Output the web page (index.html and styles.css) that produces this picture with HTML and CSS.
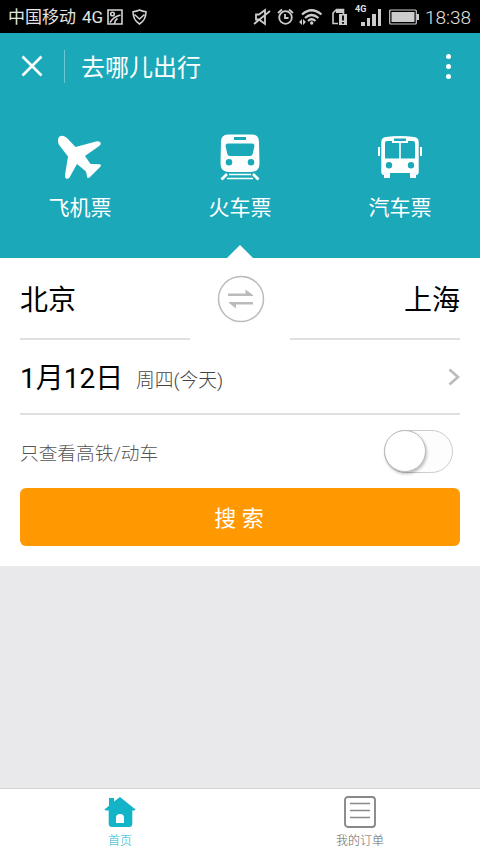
FILE: index.html
```
<!DOCTYPE html>
<html lang="zh-CN">
<head>
<meta charset="utf-8">
<title>去哪儿出行</title>
<link rel="stylesheet" href="styles.css">
</head>
<body>
<div class="status">
  <span class="carrier">中国移动</span><span class="net">4G</span>
  <svg class="s-img" width="16" height="16" viewBox="0 0 16 16" fill="none" stroke="#d4d4d4" stroke-width="1.600"><path d="M1 1H15V15H1ZM3 13.500Q6 8 13.500 6M7.500 14.500Q8 11 10.500 9.500"/><circle cx="5.500" cy="5" r="1.800"/></svg>
  <svg class="s-shield" width="15" height="16" viewBox="0 0 15 16" fill="none" stroke="#d4d4d4" stroke-width="1.500"><path d="M7.500 1Q10.500 2.500 14 2.700Q14 11 7.500 15Q1 11 1 2.700Q4.500 2.500 7.500 1ZM2.500 5.500L7.500 10L12.500 5.500"/></svg>
  <div class="status-right">
    <svg class="s-mute" width="18" height="18" viewBox="0 0 18 18" fill="none" stroke="#ccc" stroke-width="1.800"><path d="M3 6.500H6L12 2V16L6 11.500H3ZM1 16L17 3"/></svg>
    <svg class="s-alarm" width="17" height="18" viewBox="0 0 17 18" fill="none" stroke="#ccc" stroke-width="1.800"><circle cx="8.500" cy="9.500" r="6.300"/><path d="M1 5L5 1.500M12 1.500L16 5M8 6V10H11.500"/></svg>
    <svg class="s-wifi" width="24" height="18" viewBox="0 0 24 18" fill="none" stroke="#ccc" stroke-width="2.200"><path d="M3 6.500Q12.500 -2 22.500 6.500M6 10Q12.500 4 19.500 10M9 13Q12.500 9.500 16.500 13"/><circle cx="12.700" cy="15" r="1.700" fill="#ccc" stroke="none"/><path d="M0 14L3 11V17ZM4 11L7 14L4 17Z" fill="#ccc" stroke="none"/></svg>
    <svg class="s-sd" width="17" height="18" viewBox="0 0 17 18"><path d="M2 15.500V5L5.500 1.500H12.500V6M1.300 15.500H7" fill="none" stroke="#ccc" stroke-width="1.600"/><path d="M5 1H13V5H5ZM8 6H16V17H8Z" fill="#ccc"/><path d="M12 7.500V12.500M12 14V15.800" stroke="#000" stroke-width="1.800"/></svg>
    <div class="signal"><span class="sig-label">4G</span><i></i><i></i><i></i><i></i></div>
    <svg class="s-bat" width="30" height="16" viewBox="0 0 30 16"><rect x=".7" y="1" width="26.600" height="14" rx="1" fill="none" stroke="#ccc" stroke-width="1.200"/><path d="M2.500 3H25.500V13H2.500ZM28 5H30V11H28Z" fill="#ccc"/></svg>
    <span class="time">18:38</span>
  </div>
</div>
<header class="hero">
  <div class="titlebar">
    <svg class="close" width="22" height="22" viewBox="0 0 22 22" stroke="#fff" stroke-width="2.600"><path d="M1.500 1.500L20.500 20.500M20.500 1.500L1.500 20.500"/></svg>
    <span class="sep"></span>
    <h1>去哪儿出行</h1>
    <div class="more"><i></i><i></i><i></i></div>
  </div>
  <nav class="modes">
    <div class="mode">
      <svg width="48" height="48" viewBox="0 0 48 48"><path d="M3.500 3.500C6 1.800 9 3 11 5L19.500 14L40 8.500Q43.500 7.500 44.800 10Q45 12 42.500 13.500L29 23L34.500 31L43.500 31.200Q46 31.700 44.300 33.700L34 44Q31.300 46.300 31 43.500L30 38.500L21 31L13.500 44.500Q12 46.500 10 45.500Q8.500 44.500 9 42L12 23.500L3.500 12.500C1.500 10 1.500 5 3.500 3.500Z" fill="#fff"/></svg>
      <span>飞机票</span>
    </div>
    <div class="mode active">
      <svg width="48" height="48" viewBox="0 0 48 48"><path fill="#fff" fill-rule="evenodd" d="M12 1.500H36Q43 1.500 43 9L43.500 31Q43 39 35 39H13Q5 39 4.500 31L5 9Q5 1.500 12 1.500ZM18 4V7H30V4ZM12 10.500Q9.500 10.500 9.500 13L11 19.500Q11.500 23 14 23H34Q36.500 23 37 19.500L38.500 13Q38.500 10.500 36 10.500ZM13 26A3.300 3.300 0 1 0 13 32.600A3.300 3.300 0 1 0 13 26ZM35 26A3.300 3.300 0 1 0 35 32.600A3.300 3.300 0 1 0 35 26Z"/><path d="M11 41L5.500 46.500M37 41L42.500 46.500" stroke="#fff" stroke-width="2.800"/><path d="M13 41.500H35M11 45.500H37" stroke="#fff" stroke-width="1.700"/></svg>
      <span>火车票</span>
    </div>
    <div class="mode">
      <svg width="48" height="48" viewBox="0 0 48 48"><path fill="#fff" fill-rule="evenodd" d="M10 4Q24 2 38 4Q42.700 4.500 42.700 9V39Q42.700 42 40 42V45H34V40H14V45H8V42Q5.300 42 5.300 39V9Q5.300 4.500 10 4ZM18 5.500V8H30V5.500ZM9 10V25.500H23.200V10H16V8H11Q9 8 9 10ZM24.800 10V25.500H39V10Q39 8 37 8H32V10ZM13 29A3.200 3.200 0 1 0 13 35.400A3.200 3.200 0 1 0 13 29ZM35 29A3.200 3.200 0 1 0 35 35.400A3.200 3.200 0 1 0 35 29Z"/><path d="M3 14V23M45 14V23" stroke="#fff" stroke-width="2"/></svg>
      <span>汽车票</span>
    </div>
  </nav>
</header>
<main class="card">
  <div class="cities">
    <div class="city">北京</div>
    <svg class="swap" width="48" height="48" viewBox="0 0 48 48"><circle cx="24" cy="24" r="22.500" fill="none" stroke="#bbb" stroke-width="1.500"/><path fill="#bbb" d="M11 18.500H28.500V14.500L36 20V21H11ZM12 27H36V29.500H19V33.500L12 28Z"/></svg>
    <div class="city to">上海</div>
  </div>
  <div class="date">
    <span class="day">1月12日</span><span class="week">周四(今天)</span>
    <svg class="chev" width="12" height="18" viewBox="0 0 12 18" fill="none" stroke="#bbb" stroke-width="2.700"><path d="M1.500 1.500L10 9L1.500 16.500"/></svg>
  </div>
  <div class="filter"><span>只查看高铁/动车</span><div class="toggle"><i></i></div></div>
  <button class="search">搜 索</button>
</main>
<footer class="tabs">
  <div class="tab on">
    <svg width="32" height="32" viewBox="0 0 32 32"><path fill="#13b4c8" fill-rule="evenodd" d="M5 2H10V5.500L16 1L31.500 13.500L30.500 14.500H28.300V27.500Q28.300 31 25 31H8Q4.700 31 4.700 27.500V14.500H1.500L.5 13.500L5 9.800ZM12 27H20V21.500Q20 18 16 18T12 21.500Z"/></svg>
    <span>首页</span>
  </div>
  <div class="tab">
    <svg width="32" height="32" viewBox="0 0 32 32" fill="none" stroke="#888"><rect x="1" y="1" width="30" height="30" rx="3" stroke-width="1.900"/><path d="M6 7.500H26M6 14.500H26M6 21.500H26" stroke-width="1.500"/></svg>
    <span>我的订单</span>
  </div>
</footer>
</body>
</html>
```
FILE: styles.css
```
* { box-sizing: border-box; }
body {
  margin: 0;
  height: 853px;
  display: flex;
  flex-direction: column;
  background: #e9e9ec;
  font-family: Roboto, "Noto Sans CJK SC", sans-serif;
  font-weight: 300;
  overflow: hidden;
}
svg { display: block; flex: none; }
.status {
  height: 33px;
  flex: none;
  display: flex;
  align-items: center;
  padding: 0 9px 0 8px;
  background: #000;
  color: #e4e4e4;
  font-size: 17px;
  font-weight: 400;
  line-height: 33px;
  white-space: nowrap;
}
.carrier { width: 74px; padding-top: 1px; }
.net { width: 25px; padding-top: 1px; font-size: 17px; }
.s-shield { margin-left: 9px; }
.status-right { margin-left: auto; display: flex; align-items: center; }
.s-alarm { margin-left: 6px; }
.s-wifi { margin-left: 5px; }
.s-sd { margin-left: 8px; }
.signal {
  position: relative;
  width: 26px;
  height: 18px;
  margin-left: 7px;
  padding-left: 6px;
  display: flex;
  align-items: flex-end;
  gap: 2px;
}
.signal i { width: 3.500px; height: 4px; background: #ccc; }
.signal i:nth-of-type(2) { height: 8px; }
.signal i:nth-of-type(3) { height: 12px; }
.signal i:nth-of-type(4) { height: 17px; }
.sig-label { position: absolute; left: 0; top: -3px; font-size: 9px; line-height: 9px; font-weight: 700; }
.s-bat { margin-left: 8px; }
.time { width: 46px; margin-left: 6px; padding-top: 1px; font-size: 19px; font-weight: 300; }
.hero { height: 225px; flex: none; background: #1ba8b9; color: #fff; }
.titlebar { height: 66px; display: flex; align-items: center; padding: 0 29px 0 21px; }
.sep { width: 1px; height: 33px; margin: 0 16px 0 21px; background: #68c9d4; }
h1 { margin: 0; padding-top: 3px; font-size: 24px; line-height: 32px; font-weight: 400; }
.more { margin-left: auto; display: flex; flex-direction: column; gap: 5px; }
.more i { width: 5px; height: 5px; border-radius: 50%; background: #fff; }
.modes { height: 159px; display: grid; grid-template-columns: repeat(3, 1fr); }
.mode { display: flex; flex-direction: column; align-items: center; padding-top: 34px; }
.mode span { margin-top: 12px; font-size: 21px; line-height: 30px; font-weight: 400; }
.active { position: relative; }
.active::after {
  content: "";
  position: absolute;
  bottom: 0;
  left: 67px;
  border: 13px solid transparent;
  border-top: 0;
  border-bottom-color: #fff;
}
.card { height: 308px; flex: none; background: #fff; padding: 0 20px; color: #000; }
.cities { height: 82px; display: flex; justify-content: space-between; }
.city { width: 170px; height: 82px; padding-top: 3px; border-bottom: 2px solid #e0e0e0; font-size: 28px; line-height: 79px; font-weight: 400; }
.to { text-align: right; }
.swap { margin: 17px 0 0 1px; }
.date { height: 75px; display: flex; align-items: center; border-bottom: 2px solid #e0e0e0; }
.day { width: 116px; padding-top: 4px; font-size: 28px; line-height: 40px; font-weight: 400; white-space: nowrap; }
.week { padding-top: 9px; font-size: 18.800px; line-height: 30px; color: #444; }
.chev { margin-left: auto; }
.filter { height: 73px; display: flex; align-items: center; justify-content: space-between; padding-right: 7px; font-size: 18.700px; color: #555; }
.toggle { width: 69px; height: 43px; border: 1px solid #ccc; border-radius: 22px; background: #fdfdfd; }
.toggle i { display: block; width: 42px; height: 42px; margin: -1px 0 0 -1px; border: 1px solid #bbb; border-radius: 50%; background: #fff; box-shadow: 1px 2px 3px rgba(0,0,0,.25); }
.search { display: block; width: 440px; height: 58px; padding: 4px 2px 0 0; border: 0; border-radius: 6px; background: #ff9801; color: #fff; font: 400 22px/54px Roboto, "Noto Sans CJK SC", sans-serif; }
.tabs { height: 65px; flex: none; margin-top: auto; display: grid; grid-template-columns: 1fr 1fr; background: #fff; border-top: 1px solid #d5d5d5; }
.tab { display: flex; flex-direction: column; align-items: center; padding-top: 7px; font-size: 12px; line-height: 18px; color: #666; }
.tab span { margin-top: 4px; }
.tab.on { color: #13b4c8; }
```
